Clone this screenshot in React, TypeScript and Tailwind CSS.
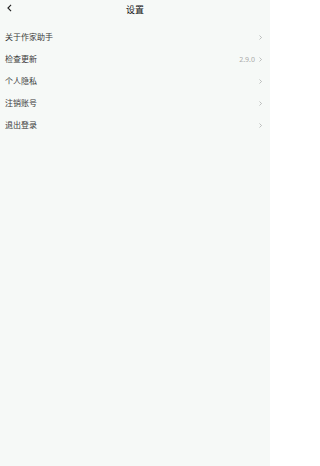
import React from "react";

const rows = [
  { label: "关于作家助手" },
  { label: "检查更新", value: "2.9.0" },
  { label: "个人隐私" },
  { label: "注销账号" },
  { label: "退出登录" },
];

const Chevron = ({ className = "" }: { className?: string }) => (
  <svg viewBox="0 0 6 10" className={className} fill="none" stroke="currentColor" strokeWidth="1.2">
    <path d="M1 1l4 4-4 4" />
  </svg>
);

export default function App() {
  return (
    <div
      className="w-[270px] h-[466px] bg-[#f6f9f7] text-[#333]"
      style={{ fontFamily: '"Noto Sans", "Noto Sans CJK SC", sans-serif' }}
    >
      {/* Header */}
      <div className="relative h-[18px] flex items-center justify-center">
        <svg
          viewBox="0 0 8 12"
          className="absolute left-[7px] top-[4px] w-[5px] h-[8px] text-[#222]"
          fill="none"
          stroke="currentColor"
          strokeWidth="1.8"
        >
          <path d="M6.5 1L1.5 6l5 5" />
        </svg>
        <span className="text-[9px] leading-none text-[#111]">设置</span>
      </div>

      {/* Rows */}
      <div className="pt-[8px]">
        {rows.map((r) => (
          <div key={r.label} className="h-[22px] flex items-center pl-[5px] pr-[8px]">
            <span className="text-[8px] leading-none text-[#3a3a3a]">{r.label}</span>
            <div className="ml-auto flex items-center gap-[4px]">
              {r.value && <span className="text-[7px] leading-none text-[#aaa]">{r.value}</span>}
              <Chevron className="w-[3px] h-[5px] text-[#999]" />
            </div>
          </div>
        ))}
      </div>
    </div>
  );
}
